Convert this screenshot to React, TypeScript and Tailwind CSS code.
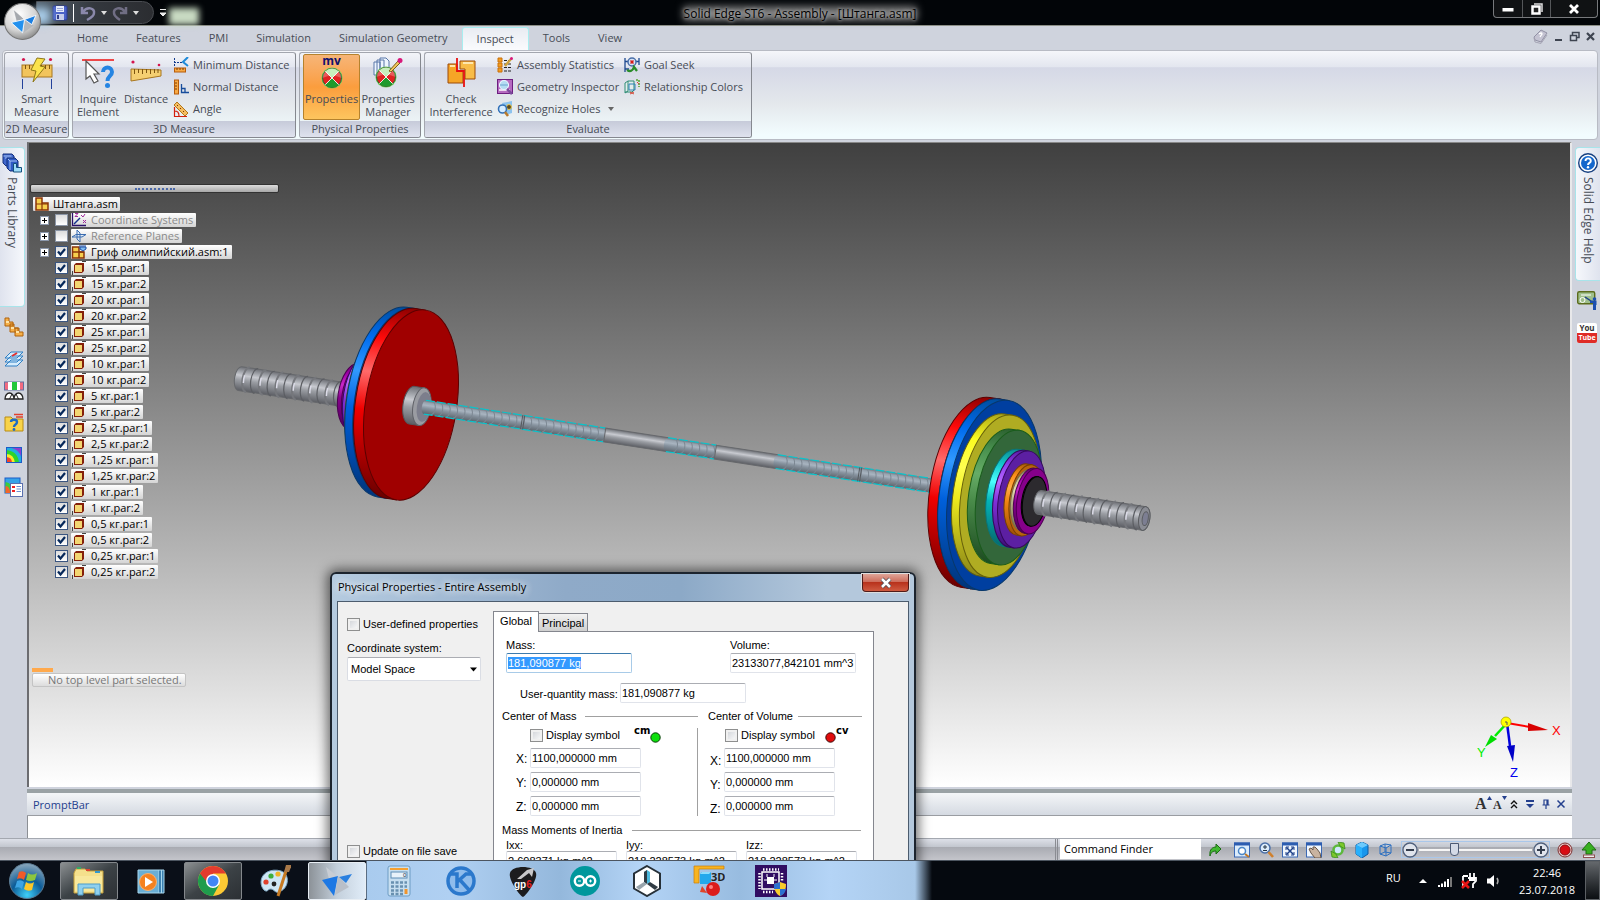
import { useEffect, useRef, type ReactNode } from "react";
import clsx from "clsx";

const TILT = "rotate(8.8)";

/* ---------- small shared controls ---------- */

function Svg({ size = 16, box = 16, children, className }: { size?: number; box?: number; children: ReactNode; className?: string }) {
  return (
    <svg width={size} height={size} viewBox={`0 0 ${box} ${box}`} className={clsx("shrink-0", className)} aria-hidden="true">
      {children}
    </svg>
  );
}

function TreeCheck({ label, checked }: { label: string; checked: boolean }) {
  return (
    <span className="grid h-[12px] w-[13px] shrink-0">
      <input
        type="checkbox"
        aria-label={label}
        defaultChecked={checked}
        className={clsx(
          "peer col-start-1 row-start-1 h-full w-full appearance-none border bg-gradient-to-b from-[#dcdcdc] to-white",
          checked ? "border-[#3a5580]" : "border-[#8b95a5]"
        )}
      />
      <svg viewBox="0 0 13 12" className="pointer-events-none col-start-1 row-start-1 hidden h-full w-full peer-checked:block">
        <path d="M3 5.5 L5.5 8.5 L10 3" fill="none" stroke="#06285a" strokeWidth="2.2" />
      </svg>
    </span>
  );
}

function DialogCheck({ label }: { label: string }) {
  return (
    <label className="flex items-center gap-[3px]">
      <input
        type="checkbox"
        className="h-[13px] w-[13px] appearance-none border border-[#8e8f8f] bg-gradient-to-br from-[#cdd0d5] to-white shadow-[inset_0_0_0_2px_#f0f0f0]"
      />
      {label}
    </label>
  );
}

/* ---------- title bar ---------- */

function AppLogo({ size }: { size: number }) {
  return (
    <Svg size={size} box={36}>
      <defs>
        <radialGradient id="orb" cx="0.4" cy="0.3" r="0.75">
          <stop offset="0" stopColor="#ffffff" />
          <stop offset="0.6" stopColor="#d5d5d5" />
          <stop offset="1" stopColor="#858585" />
        </radialGradient>
      </defs>
      <circle cx="18" cy="18" r="17.5" fill="url(#orb)" stroke="#777" />
      <path d="M9 6 L20 16 L12 18 Z" fill="#a5a9ae" stroke="#fff" strokeWidth="0.6" />
      <path d="M20 16 L19 29 L29 22 Z" fill="#b3b7bc" />
      <path d="M7 19 L20 16 L18 29 Z" fill="#2391ee" stroke="#fff" strokeWidth="0.8" />
      <path d="M20 16 L31 12 L27 21 Z" fill="#1b7fe2" stroke="#fff" strokeWidth="0.8" />
    </Svg>
  );
}

function TitleBar() {
  return (
    <header className="relative flex h-[26px] items-start border-b border-[#8c8f86] bg-[#020508]">
      <div className="absolute left-[169px] top-[8px] h-[17px] w-[30px] bg-[#c8dac2] blur-[3px]" />
      <div className="absolute left-[32px] top-[8px] h-[16px] w-[18px] bg-[#a9cdea] blur-[4px]" />
      <div className="absolute left-[4px] top-[3px] z-10">
        <AppLogo size={37} />
      </div>
      <div className="ml-9 mt-px flex h-[23px] w-[118px] items-center gap-1 rounded-r-xl border border-[#4a4d52] bg-gradient-to-r from-[#8fa7bc]/60 via-[#33373d] to-[#2b2d31] pl-[15px]">
        <button aria-label="Save">
          <Svg>
            <rect x="1" y="1" width="14" height="14" rx="1" fill="#4a62c8" stroke="#2b3b94" />
            <rect x="4" y="1" width="8" height="6" fill="#e6ecfb" />
            <rect x="4" y="9" width="8" height="6" fill="#c5cdec" />
            <path d="M5 3.500 H11 M5 5.500 H11" stroke="#9aa6d8" />
            <rect x="5" y="10" width="2" height="4" fill="#303d8c" />
          </Svg>
        </button>
        <span className="mx-px h-[18px] w-px bg-white" />
        <button aria-label="Undo" className="flex items-center gap-1">
          <Svg size={18} box={18}>
            <path d="M3 3 V9 H9 M4 8 C8 2 16 4 15 9 C15 12 12 14 8 16" fill="none" stroke="#8a88aa" strokeWidth="2.500" />
          </Svg>
          <Svg size={6} box={6}><path d="M0 1 H6 L3 5 Z" fill="#ddd" /></Svg>
        </button>
        <button aria-label="Redo" className="flex items-center gap-1">
          <Svg size={18} box={18}>
            <path d="M15 3 V9 H9 M14 8 C10 2 2 4 3 9 C3 12 6 14 9 16" fill="none" stroke="#706e84" strokeWidth="2.500" />
          </Svg>
          <Svg size={6} box={6}><path d="M0 1 H6 L3 5 Z" fill="#ddd" /></Svg>
        </button>
      </div>
      <button aria-label="Customize toolbar" className="ml-1 mt-[8px]">
        <Svg size={10} box={10}><path d="M2 1.500 H8 M2 5 H8 L5 8 Z" fill="#eee" stroke="#eee" /></Svg>
      </button>
      <div className="absolute left-1/2 top-[6px] -translate-x-1/2">
        <div className="absolute inset-x-0 inset-y-px bg-[#8c8c8c] blur-[4px]" />
        <h1 className="relative whitespace-nowrap text-[12px] leading-[15px] text-black [text-shadow:0_0_3px_#aaa,0_0_4px_#999]">
          Solid Edge ST6 - Assembly - [Штанга.asm]
        </h1>
      </div>
      <div className="absolute right-[2px] top-0 flex h-[18px] rounded-b border border-t-0 border-[#77797c] bg-[#101214]">
        <button aria-label="Minimize" className="grid w-[29px] place-items-center border-r border-[#55575a]">
          <Svg size={12} box={12}><rect x="0.500" y="5" width="11" height="3.500" fill="#fff" /></Svg>
        </button>
        <button aria-label="Restore" className="grid w-[28px] place-items-center border-r border-[#55575a]">
          <Svg size={12} box={12}>
            <path d="M3 1 H11 V9" fill="none" stroke="#ddd" strokeWidth="1.500" />
            <rect x="1.500" y="3.500" width="7" height="7" fill="#222" stroke="#fff" strokeWidth="2.500" />
          </Svg>
        </button>
        <button aria-label="Close" className="grid w-[46px] place-items-center">
          <Svg size={12} box={12}><path d="M2 2 L10 10 M10 2 L2 10" stroke="#fff" strokeWidth="2.800" /></Svg>
        </button>
      </div>
    </header>
  );
}

/* ---------- ribbon ---------- */

const tabs = ["Home", "Features", "PMI", "Simulation", "Simulation Geometry", "Inspect", "Tools", "View"];

function TabRow() {
  return (
    <nav className="flex h-[24px] items-end bg-[#cfd3dd] pl-[63px]">
      {tabs.map((tab) => (
        <button
          key={tab}
          className={clsx(
            "h-[23px] px-[14px] text-[11px] text-[#474c56]",
            tab === "Inspect" && "rounded-t-[3px] border border-b-0 border-[#a8eef0] bg-gradient-to-b from-[#e9ecf2] to-[#fafbfd]"
          )}
        >
          {tab}
        </button>
      ))}
      <div className="ml-auto flex items-center gap-[5px] pb-[6px] pr-[4px]">
        <button aria-label="Help topics">
          <Svg size={15} box={15}>
            <path d="M1 8 L8 1 L14 4 L8 13 L2 11 Z" fill="#c4c3d2" stroke="#9291a5" />
            <path d="M1 9 L2 13 L8 14.500 L14 6" fill="none" stroke="#a5a4b4" />
            <path d="M6 5 Q9 3 9 5 L7 8" fill="none" stroke="#fff" strokeWidth="1.300" />
          </Svg>
        </button>
        <button aria-label="Minimize document">
          <Svg size={11} box={11}><rect x="2" y="8" width="7" height="2" fill="#3e4450" /></Svg>
        </button>
        <button aria-label="Restore document">
          <Svg size={11} box={11}>
            <path d="M3.500 4 V1.500 H10 V6.500 H7" fill="none" stroke="#3e4450" strokeWidth="1.500" />
            <rect x="1.500" y="4.500" width="6" height="5" fill="none" stroke="#3e4450" strokeWidth="1.500" />
          </Svg>
        </button>
        <button aria-label="Close document">
          <Svg size={11} box={11}><path d="M2 2 L9 9 M9 2 L2 9" stroke="#3e4450" strokeWidth="2.200" /></Svg>
        </button>
      </div>
    </nav>
  );
}

function Ball({ cx, cy, r = 9 }: { cx: number; cy: number; r?: number }) {
  return (
    <g transform={`translate(${cx} ${cy}) scale(${r / 9})`}>
      <circle r="9.500" fill="#6fce5a" />
      <circle r="8.500" fill="#e02222" stroke="#24622c" strokeWidth="0.800" />
      <path d="M0 0 L-6 -6 A8.500 8.500 0 0 1 6 -6 Z" fill="#b4eaa8" />
      <path d="M0 0 L-6 6 A8.500 8.500 0 0 0 6 6 Z" fill="#1f9a2c" />
      <path d="M-8.500 0 A8.500 8.500 0 0 1 8.500 0 Q0 -4 -8.500 0 Z" fill="#fff" fillOpacity="0.250" />
      <path d="M-6 -6 L6 6 M6 -6 L-6 6" stroke="#fff" strokeWidth="0.800" />
    </g>
  );
}

const smartIcon = (
  <Svg size={32} box={32}>
    <circle cx="2.500" cy="2.500" r="1.600" fill="#d4144e" />
    <circle cx="29.500" cy="2.500" r="1.600" fill="#d4144e" />
    <rect x="1" y="8" width="30" height="12" fill="#f2c45c" stroke="#a8761e" />
    <path d="M4.500 8 V12 M8.500 8 V12 M12.500 8 V12 M20.500 8 V12 M24.500 8 V12 M28.500 8 V12" stroke="#7d5510" />
    <path d="M1.500 22 V32 M30.500 22 V32" stroke="#23419a" />
    <path d="M16 1 L24 2 L19 9 L24 10 L12 25 L15 14 L10 13 Z" fill="#fbe34c" stroke="#8d7716" />
  </Svg>
);

const inquireIcon = (
  <Svg size={32} box={32}>
    <path d="M0 3 H32" stroke="#ee1111" strokeWidth="1.500" />
    <path d="M4 4 V22 L8 19 L12 26 L16 24 L12 17 H17 Z" fill="#fff" stroke="#555" strokeWidth="1.200" />
    <path d="M21 15 C21 9 30 9 30 15 C30 19 25.500 19 25.500 24" fill="none" stroke="#2584e2" strokeWidth="4" />
    <circle cx="25.500" cy="28.500" r="2.500" fill="#2584e2" />
  </Svg>
);

const distanceIcon = (
  <Svg size={32} box={32}>
    <circle cx="3" cy="5" r="1.600" fill="#d4144e" />
    <circle cx="29" cy="8" r="1.300" fill="#d4144e" />
    <path d="M1 12 L31 13 V19 L1 24 Z" fill="#f5cf71" stroke="#a8761e" />
    <path d="M4.500 12 V17 M8.500 12 V16 M12.500 12 V17 M16.500 12 V16 M20.500 12 V17 M24.500 12 V16 M28 12 V16" stroke="#7d5510" />
  </Svg>
);

const propertiesIcon = (
  <span className="flex h-[32px] flex-col items-center">
    <span className="h-[10px] text-[12px] font-bold leading-[7px] text-[#10106e]">mv</span>
    <Svg size={22} box={22}>
      <Ball cx={11} cy={11} r={10} />
    </Svg>
  </span>
);

const managerIcon = (
  <Svg size={32} box={32}>
    <path d="M2 5 H8 V18 H2 Z M5 3 H12 V17 H5 Z M8 1 H14 L17 4 V15 H8 Z" fill="#eef5ff" stroke="#5877a8" />
    <Ball cx={14} cy={20} r={10} />
    <path d="M17 14 L26 4 L28 6 L19 15 Z" fill="#f0c65a" stroke="#7c5d1b" />
    <circle cx="28" cy="3.500" r="2.500" fill="#d8187a" />
  </Svg>
);

const interferenceIcon = (
  <Svg size={32} box={32}>
    <path d="M3 7 H12 V14 H18 V26 H3 Z" fill="#f6a526" stroke="#9c4a08" />
    <path d="M15 4 H30 V22 H20 V12 H15 Z" fill="#f8bc48" stroke="#9c4a08" />
    <path d="M5 9 H10 M18 6 H28" stroke="#ffe7ae" strokeWidth="2" />
    <path d="M12 1 V14 H19 V30" fill="none" stroke="#e81010" strokeWidth="1.800" />
  </Svg>
);

const smallIcons: Record<string, ReactNode> = {
  "Minimum Distance": (
    <Svg>
      <path d="M1.500 1 V9 M1 5.500 H10" stroke="#123a8c" strokeDasharray="2 1" />
      <path d="M15 0 L10 5 L15 9" fill="none" stroke="#1f8ad8" strokeWidth="2" />
      <rect x="1.500" y="11" width="11" height="4" fill="#f7a944" stroke="#b75a08" />
      <path d="M4 11 V13 M7 11 V13 M10 11 V13" stroke="#7c3c04" />
    </Svg>
  ),
  "Normal Distance": (
    <Svg>
      <rect x="1.500" y="1" width="4" height="14" fill="#f7a944" stroke="#b75a08" />
      <path d="M2 4 H4 M2 7 H4 M2 10 H4" stroke="#7c3c04" />
      <path d="M8.500 5 V13.500 H16 M8.500 9.500 H12 V13" fill="none" stroke="#174d9c" strokeWidth="1.300" />
    </Svg>
  ),
  Angle: (
    <Svg>
      <path d="M4 1 L15 12 L12 15 L1 4 Z" fill="#f5bd60" stroke="#b3771a" />
      <path d="M5 4 L4 5 M8 7 L7 8 M11 10 L10 11" stroke="#7c3c04" />
      <path d="M1.500 6 V15.500 H14 M1.500 10 Q6 10 6 15" fill="none" stroke="#d3200e" strokeWidth="1.200" />
    </Svg>
  ),
  "Assembly Statistics": (
    <Svg>
      <path d="M1 1 H5 V5 H1 Z M1 6 H5 V10 H1 Z M1 11 H5 V15 H1 Z" fill="#f59c1c" stroke="#c8700c" />
      <path d="M7 3.500 H15 M7 7 H15 M7 10.500 H15 M7 14 H15" stroke="#222" strokeDasharray="3 1" />
      <path d="M8 9 L14 2" stroke="#cfa23c" strokeWidth="2.400" />
      <circle cx="14.500" cy="1.500" r="1.500" fill="#d8187a" />
    </Svg>
  ),
  "Geometry Inspector": (
    <Svg>
      <rect x="0.500" y="0.500" width="15" height="14" fill="#b56ac0" stroke="#6d1e80" />
      <path d="M2 11 H13" stroke="#fff" strokeWidth="1.500" />
      <circle cx="7" cy="6" r="4.500" fill="#b4dcf2" stroke="#e8f6ff" strokeWidth="1.200" />
      <path d="M3 6 H11" stroke="#6aa4d0" />
      <path d="M10 10 L15 15" stroke="#7c4a9c" strokeWidth="2.500" />
    </Svg>
  ),
  "Recognize Holes": (
    <Svg>
      <path d="M5 2 L15 0 V12 L9 14 Z" fill="#8cc3ee" />
      <circle cx="12" cy="6" r="2.500" fill="#5b4a22" stroke="#eacb55" />
      <circle cx="5.500" cy="8" r="4" fill="#d6edff" stroke="#3170b8" strokeWidth="1.600" />
      <path d="M8 11 L11 15" stroke="#b87a2c" strokeWidth="2.500" />
    </Svg>
  ),
  "Goal Seek": (
    <Svg>
      <path d="M1 1 V15 M15 1 V8 M1 4.500 H15 M1 12 H5" stroke="#1f4a90" strokeWidth="1.300" />
      <circle cx="8" cy="5" r="4" fill="#d6e4f8" stroke="#4a6fa8" strokeWidth="1.500" />
      <path d="M6.500 3.500 L9.500 6.500 M9.500 3.500 L6.500 6.500" stroke="#d81818" strokeWidth="1.500" />
      <path d="M3 13 Q8 16 10 10 L13 14" fill="none" stroke="#2a8c2a" strokeWidth="2.300" />
    </Svg>
  ),
  "Relationship Colors": (
    <Svg>
      <path d="M1 4 L4 2 V12 L1 14 Z M4 2 H10 V11 L8 13 H1" fill="#e8f4ee" fillOpacity="0.600" stroke="#2f8c74" />
      <path d="M5 5 H11 V11 H5 Z" fill="none" stroke="#2c82b8" />
      <path d="M12 1 H15 V8" fill="none" stroke="#57a835" strokeWidth="1.600" strokeDasharray="2 1" />
      <path d="M6 13 L10 15 M10 13 L6 15 M13 3 L15 5" stroke="#d24a3a" />
    </Svg>
  ),
};

function BigButton({ icon, lines, active, className }: { icon: ReactNode; lines: string[]; active?: boolean; className?: string }) {
  return (
    <button
      className={clsx(
        "flex h-[66px] flex-col items-center rounded-[2px] text-[11px] leading-[13px] text-[#474c56]",
        active ? "border border-[#b5822d] bg-gradient-to-b from-[#f6b577] via-[#fb9d3d] to-[#fdc55e] pt-[2px]" : "pt-[3px]",
        className
      )}
    >
      {icon}
      <span className="mt-[3px] whitespace-pre">{lines.join("\n")}</span>
    </button>
  );
}

function SmallButton({ label, menu }: { label: string; menu?: boolean }) {
  return (
    <button className="flex h-[22px] items-center gap-1 whitespace-nowrap text-[11px] text-[#474c56]">
      {smallIcons[label]}
      {label}
      {menu && <Svg size={6} box={6} className="ml-1"><path d="M0 1 H6 L3 5 Z" fill="#666" /></Svg>}
    </button>
  );
}

function Group({ title, className, children }: { title: string; className: string; children: ReactNode }) {
  return (
    <section
      className={clsx(
        "flex shrink-0 flex-col overflow-hidden rounded-[3px] border border-[#a3a6ae] border-r-[#85888f] border-b-[#85888f]",
        className
      )}
    >
      <div className="flex flex-1 pt-px">{children}</div>
      <h2 className="h-[16px] whitespace-nowrap bg-gradient-to-b from-[#c6cad9] to-[#dfe2ee] text-center text-[11px] leading-[15px] text-[#474c56]">
        {title}
      </h2>
    </section>
  );
}

function Ribbon() {
  return (
    <div className="mx-[2px] flex h-[90px] gap-[3px] rounded border border-[#b8bbc4] bg-[linear-gradient(#f5f6fa,#e3e6ef_18%,#d5d8e6_19%,#e4e8ec_60%,#f2fcfe_95%)] p-px">
      <Group title="2D Measure" className="w-[65px]">
        <BigButton icon={smartIcon} lines={["Smart", "Measure"]} className="w-full" />
      </Group>
      <Group title="3D Measure" className="w-[224px]">
        <BigButton icon={inquireIcon} lines={["Inquire", "Element"]} className="w-[50px]" />
        <BigButton icon={distanceIcon} lines={["Distance"]} className="w-[46px]" />
        <div className="flex flex-col pl-1">
          <SmallButton label="Minimum Distance" />
          <SmallButton label="Normal Distance" />
          <SmallButton label="Angle" />
        </div>
      </Group>
      <Group title="Physical Properties" className="w-[122px]">
        <BigButton icon={propertiesIcon} lines={["Properties"]} active className="ml-[3px] w-[57px]" />
        <BigButton icon={managerIcon} lines={["Properties", "Manager"]} className="w-[56px]" />
      </Group>
      <Group title="Evaluate" className="w-[328px]">
        <BigButton icon={interferenceIcon} lines={["Check", "Interference"]} className="w-[72px]" />
        <div className="flex w-[127px] flex-col">
          <SmallButton label="Assembly Statistics" />
          <SmallButton label="Geometry Inspector" />
          <SmallButton label="Recognize Holes" menu />
        </div>
        <div className="flex flex-col">
          <SmallButton label="Goal Seek" />
          <SmallButton label="Relationship Colors" />
        </div>
      </Group>
    </div>
  );
}

/* ---------- side rails ---------- */

function LeftRail() {
  return (
    <aside className="flex w-[27px] shrink-0 flex-col bg-[#cfd3dd] pt-[5px]">
      <button className="flex h-[160px] w-[25px] flex-col items-center rounded-r-[4px] border border-l-0 border-[#a8e4ea] bg-gradient-to-r from-[#dfe3ee] to-[#f6f8fc] pt-[5px]">
        <Svg size={20} box={20}>
          <path d="M1 1 H10 L12 3 V13 H4 L1 10 Z" fill="#3f66cc" stroke="#14307c" />
          <path d="M1.500 3 H9.500 M3 5 H11" stroke="#a8c4f6" />
          <path d="M5 5 H13 L16 8 V18 H8 L5 15 Z" fill="#2e5ac4" stroke="#14307c" />
          <path d="M6 6 L8 8 H15 M8 8 V17" fill="none" stroke="#a8c4f6" />
          <path d="M11.500 10.500 H14.500 V14.500 H19.500 V19 H11.500 Z" fill="#9fdcf8" stroke="#14507c" />
        </Svg>
        <span className="mt-1 text-[12px] leading-[14px] text-[#474c56] [writing-mode:vertical-rl]">Parts Library</span>
      </button>
      <div className="flex flex-col items-center gap-[12px] pt-[10px]">
        <button aria-label="Part families">
          <Svg size={20} box={20}>
            <path d="M1 1 H5 V5 H9 V9 H1 Z M6 7 H10 V11 H14 V15 H6 Z M11 11 H15 V15 H19 V19 H11 Z" fill="#f5b04a" stroke="#b0620c" />
            <path d="M2 5 H5 M7 11 H10 M12 15 H15" stroke="#ffe3a6" strokeWidth="2" />
          </Svg>
        </button>
        <button aria-label="Layers">
          <Svg size={20} box={20}>
            <path d="M1 17 L7 11 H19 L13 17 Z M1 13 L7 7 H19 L13 13 Z M1 9 L7 3 H19 L13 9 Z" fill="#d6ecfc" stroke="#2f7fc4" />
            <path d="M8 7 L13 4" stroke="#e23030" strokeWidth="2" />
          </Svg>
        </button>
        <button aria-label="Sensors">
          <Svg size={20} box={20}>
            <rect x="0.500" y="1" width="19" height="8" fill="#f26a80" stroke="#6270a0" />
            <rect x="4" y="1" width="4" height="8" fill="#fff" />
            <rect x="8" y="1" width="5" height="8" fill="#22c83a" />
            <rect x="13" y="1" width="3" height="8" fill="#fff" />
            <path d="M1 18 A4.500 6 0 0 1 10 18 Z M10 18 A4.500 6 0 0 1 19 18 Z" fill="#fff" stroke="#222" strokeWidth="1.300" />
            <path d="M5.500 18 L8 13 M14.500 18 L12 13" stroke="#222" />
          </Svg>
        </button>
        <button aria-label="Assembly help">
          <Svg size={20} box={20}>
            <path d="M1 4 H7 L9 6 H19 V18 H1 Z" fill="#f8d34a" stroke="#b88c14" />
            <path d="M10 1.500 H19 M12 4 H19" stroke="#e2402c" strokeWidth="1.500" />
            <path d="M7 9 C7 6 13 6 13 9 C13 12 10 11 10 14" fill="none" stroke="#1d6cc4" strokeWidth="2.400" />
            <circle cx="10" cy="16.500" r="1.400" fill="#1d6cc4" />
          </Svg>
        </button>
        <button aria-label="Simulation">
          <Svg size={20} box={20}>
            <rect x="2" y="2" width="16" height="16" fill="#8b3fd0" />
            <path d="M2 2 Q18 3 18 18 H2 Z" fill="#1faee0" />
            <path d="M2 5 Q14 6 15 18 H2 Z" fill="#2cd42c" />
            <path d="M2 9 Q10 9 11 18 H2 Z" fill="#f8ec2a" />
            <path d="M2 12 Q8 12 8 18 H2 Z" fill="#f3442a" />
            <rect x="2.500" y="2.500" width="15" height="15" fill="none" stroke="#1a5cc8" />
          </Svg>
        </button>
        <button aria-label="Simulation report">
          <Svg size={20} box={20}>
            <rect x="1" y="1" width="15" height="15" fill="#36a2e8" stroke="#1a5cc8" />
            <path d="M1.500 5 Q9 6 9 16 H1.500 Z" fill="#3ccc3c" />
            <path d="M1.500 9 Q6 9 6 16 H1.500 Z" fill="#f5642a" />
            <rect x="6.500" y="6.500" width="12" height="13" fill="#fff" stroke="#5a6fae" />
            <path d="M8 10 H11 M8 14 H11" stroke="#e22" strokeWidth="2" />
            <path d="M12.500 9.500 H17 M12.500 12 H17 M12.500 14.500 H17" stroke="#6c8fd0" />
          </Svg>
        </button>
      </div>
    </aside>
  );
}

function RightRail() {
  return (
    <aside className="flex w-[28px] shrink-0 flex-col items-end bg-[#cfd3dd] pt-[5px]">
      <button className="flex h-[134px] w-[25px] flex-col items-center rounded-l-[4px] border border-r-0 border-[#a8e4ea] bg-gradient-to-r from-[#f6f8fc] to-[#dfe3ee] pt-[5px]">
        <Svg size={20} box={20}>
          <circle cx="10" cy="10" r="9.300" fill="#fff" stroke="#153f80" strokeWidth="1.400" />
          <circle cx="10" cy="10" r="7" fill="#1467cc" />
          <path d="M7.500 8 C7.500 4.500 12.800 4.500 12.800 8 C12.800 10 10 9.800 10 12" fill="none" stroke="#fff" strokeWidth="1.900" />
          <circle cx="10" cy="14.300" r="1.200" fill="#fff" />
        </Svg>
        <span className="mt-1 whitespace-nowrap text-[12px] leading-[14px] text-[#474c56] [writing-mode:vertical-rl]">Solid Edge Help</span>
      </button>
      <div className="flex flex-col gap-[13px] pr-[3px] pt-[9px]">
        <button aria-label="Training">
          <Svg size={20} box={20}>
            <rect x="0.700" y="1.700" width="17" height="12" rx="1.500" fill="#9fbf8c" stroke="#5c6c1c" strokeWidth="1.400" />
            <path d="M4 5 H14" stroke="#fff" />
            <circle cx="5.500" cy="10" r="2.500" fill="none" stroke="#fff" />
            <path d="M8 7 L14 11" stroke="#1c3f8c" strokeWidth="1.500" />
            <circle cx="17.500" cy="9" r="1.800" fill="#1c4fb0" />
            <path d="M13 10.500 H19.500 V15 H19 V20 H16 V13 H13 Z" fill="#1c4fb0" />
          </Svg>
        </button>
        <button aria-label="YouTube" className="flex w-5 flex-col overflow-hidden rounded-[2px] bg-white text-[8px] font-bold leading-[10px] text-[#333]">
          <span>You</span>
          <span className="bg-[#df2b26] text-[7px] text-white">Tube</span>
        </button>
      </div>
    </aside>
  );
}

/* ---------- model ---------- */

type DiscSpec = { from: number; to: number; r: number; rim: string; face: string; line: string };

// positions run along the bar's axis, measured from the inner face of the left stack
const outerStack: DiscSpec[] = [
  { from: 571, to: 581, r: 96, rim: "red", face: "#a00000", line: "#5c0000" },
  { from: 581, to: 590, r: 96, rim: "blue", face: "#003fa0", line: "#08386a" },
  { from: 588, to: 596, r: 82, rim: "yellow", face: "#b0ac22", line: "#66600a" },
  { from: 597, to: 605, r: 68, rim: "green", face: "#33673a", line: "#1a5c1c" },
  { from: 606, to: 613, r: 49, rim: "cyan", face: "#109090", line: "#0a7478" },
  { from: 613, to: 618, r: 49, rim: "violet", face: "#5c1fa2", line: "#35085c" },
  { from: 618, to: 623, r: 36, rim: "orange", face: "#b8640c", line: "#774004" },
  { from: 622, to: 627, r: 31, rim: "beige", face: "#a09a70", line: "#77704c" },
  { from: 626, to: 629, r: 33, rim: "magenta", face: "#86008a", line: "#4c0052" },
  { from: 630, to: 631, r: 25, rim: "black", face: "#2c2a2e", line: "#000000" },
];

const innerStack: DiscSpec[] = [
  { from: -58, to: -54, r: 33, rim: "magenta", face: "#86008a", line: "#4c0052" },
  { from: -46, to: -42, r: 47, rim: "violet", face: "#5c1fa2", line: "#35085c" },
  { from: -30, to: -25, r: 68, rim: "green", face: "#33673a", line: "#1a5c1c" },
  { from: -26, to: -19, r: 82, rim: "yellow", face: "#b0ac22", line: "#66600a" },
  { from: -19, to: -11, r: 96, rim: "blue", face: "#003fa0", line: "#08386a" },
  { from: -10, to: 0, r: 96, rim: "red", face: "#a00000", line: "#5c0000" },
];

const rims: Record<string, string[]> = {
  red: ["#8c0000", "#ff0a0a", "#ff6a6a", "#f00000", "#6c0000"],
  blue: ["#004c9c", "#006cf0", "#329aff", "#0060dc", "#00357c"],
  yellow: ["#a8a418", "#fcfc20", "#ffff50", "#ece81c", "#8c8818"],
  green: ["#2c6030", "#4a9250", "#66ac66", "#4a8c4a", "#1e4c22"],
  cyan: ["#0c8c90", "#14c8cc", "#4cffff", "#04b4b8", "#046c70"],
  violet: ["#5818a0", "#9040f0", "#b868ff", "#8030d8", "#40107c"],
  orange: ["#a85c08", "#ff9018", "#ffac48", "#f08410", "#a05008"],
  beige: ["#8c8660", "#c8c090", "#e4dcb0", "#b8b088", "#78724c"],
  magenta: ["#60006a", "#a000a8", "#c828c8", "#88008c", "#50005c"],
  black: ["#111", "#222", "#333", "#222", "#000"],
  steel: ["#6c6e74", "#9a9da3", "#c8cad0", "#9a9da3", "#5c5e64"],
  grip: ["#6c747c", "#98a4b0", "#a8b4c0", "#8894a0", "#5c646c"],
};

function Disc({ from, to, r, rim, face, line }: DiscSpec) {
  const rx = r * 0.475;
  return (
    <g stroke={line} strokeWidth="1">
      <path d={`M${to} ${-r} L${from} ${-r} A${rx} ${r} 0 0 0 ${from} ${r} L${to} ${r} Z`} fill={`url(#rim-${rim})`} />
      <ellipse cx={to} cy="0" rx={rx} ry={r} fill={face} />
    </g>
  );
}

function Sleeve({ from, to, cap }: { from: number; to: number; cap?: boolean }) {
  const grooves = [];
  for (let s = from + 8; s < to - 2; s += 8.400) grooves.push(s);
  return (
    <g fill="none">
      <path d={`M${to} -12 L${from} -12 A5.500 12 0 0 0 ${from} 12 L${to} 12 A5.500 12 0 0 0 ${to} -12`} fill="url(#rim-steel)" stroke="#66686c" strokeWidth="1" />
      {grooves.map((s, i) => (
        <g key={s}>
          <path
            d={`M${s} -12.500 A5.500 12.500 0 0 0 ${s} 12.500`}
            stroke={i % 2 ? "#5c5e63" : "#75777c"}
            strokeWidth={i % 2 ? 1.200 : 2}
          />
          {i % 2 === 0 && <path d={`M${s - 4} -4 A5.500 12.500 0 0 0 ${s - 4} 4`} stroke="#dcdce8" strokeWidth="1.500" />}
        </g>
      ))}
      {cap && (
        <>
          <ellipse cx={to} cy="0" rx="5.500" ry="12" fill="#8a8c94" stroke="#5a5c60" />
          <ellipse cx={to + 1} cy="0" rx="3" ry="7" fill="#7c7e92" stroke="#5a5c60" />
        </>
      )}
    </g>
  );
}

function Grip({ from, to }: { from: number; to: number }) {
  const waves = [];
  for (let s = from + 7; s < to; s += 7.500) waves.push(s);
  return (
    <g>
      <path d={`M${to} -7 H${from} A3 7 0 0 0 ${from} 7 H${to} Z`} fill="url(#rim-grip)" />
      {waves.map((s) => (
        <path key={s} d={`M${s} -6.500 A3.500 6.500 0 0 1 ${s} 6.500`} fill="none" stroke="#7c8792" strokeWidth="1" />
      ))}
      <path d={`M${from} -7 H${to} M${from} 7 H${to}`} stroke="#08c4cc" strokeWidth="1.200" strokeDasharray="9 2" />
    </g>
  );
}

function Barbell() {
  return (
    <svg viewBox="220 290 960 320" className="absolute left-[191px] top-[147px] h-[320px] w-[960px]" role="img" aria-label="Barbell model">
      <defs>
        {Object.entries(rims).map(([name, c]) => (
          <linearGradient key={name} id={`rim-${name}`} x1="0" y1="0" x2="0" y2="1">
            <stop offset="0" stopColor={c[0]} />
            <stop offset="0.180" stopColor={c[1]} />
            <stop offset="0.360" stopColor={c[2]} />
            <stop offset="0.560" stopColor={c[3]} />
            <stop offset="1" stopColor={c[4]} />
          </linearGradient>
        ))}
      </defs>
      <g transform={`translate(411 405) ${TILT}`}>
        <Sleeve from={-173} to={-58} />
        {innerStack.map((d) => <Disc key={d.from} {...d} />)}
        <path d="M11 -19 H1 A9 19 0 0 0 1 19 H11 Z" fill="url(#rim-steel)" stroke="#55575c" />
        <ellipse cx="11" cy="0" rx="9" ry="19" fill="#9a9ca2" stroke="#606268" />
        <ellipse cx="13" cy="0" rx="7" ry="15" fill="#7c7e8c" />
        <Grip from={14} to={196} />
        <rect x="196" y="-7" width="63" height="14" fill="url(#rim-steel)" stroke="#66686c" />
        <Grip from={259} to={308} />
        <rect x="308" y="-7" width="62" height="14" fill="url(#rim-steel)" stroke="#66686c" />
        <Grip from={370} to={532} />
        <path d="M112 -7 V7 M114 -7 V7 M453 -7 V7 M455 -7 V7" stroke="#55595e" />
        {outerStack.map((d) => <Disc key={d.from} {...d} />)}
        <Sleeve from={636} to={742} cap />
      </g>
    </svg>
  );
}

function Triad() {
  return (
    <svg viewBox="0 0 92 68" className="absolute bottom-[7px] right-px h-[68px] w-[92px]" role="img" aria-label="Axes">
      <path d="M30 11 L53 15" stroke="#f00" strokeWidth="2" />
      <path d="M51 11 L71 18 L51 19 Z" fill="#d80000" />
      <path d="M30 11 L18 24" stroke="#0e0" strokeWidth="2.500" />
      <path d="M14 23 L20 27 L8 35 Z" fill="#0d0" />
      <path d="M30 11 L33 34" stroke="#00d" strokeWidth="2.500" />
      <path d="M30 34 L38 33 L36 50 Z" fill="#0000c8" />
      <circle cx="29" cy="10" r="5" fill="#ff0" stroke="#a89a00" strokeWidth="0.700" />
      <path d="M28 10 H30 V13" fill="none" stroke="#555" />
      <g fontFamily="Liberation Sans" fontSize="13">
        <text x="75" y="23" fill="#f00">X</text>
        <text x="0" y="45" fill="#0e0">Y</text>
        <text x="33" y="65" fill="#00e">Z</text>
      </g>
    </svg>
  );
}

/* ---------- path finder tree ---------- */

const partNames = ["15", "20", "25", "10", "5", "2,5", "1,25", "1", "0,5", "0,25"].flatMap((kg) => [
  `${kg} кг.par:1`,
  `${kg} кг.par:2`,
]);

const partIcon = (
  <Svg size={16} box={16}>
    <path d="M1.500 11 V15 M11 1.500 H15" stroke="#444" />
    <path d="M3 5 L5 3 H13 V11 L11 13 H3 Z" fill="#85200a" />
    <rect x="4" y="5" width="7" height="7" fill="#f3d672" />
  </Svg>
);

const asmIcon = (
  <Svg size={14} box={14}>
    <path d="M1 1 H7 V6 H13 V13 H1 Z" fill="#f6cf4e" stroke="#8a3408" strokeWidth="1.500" />
    <path d="M1 7 H13 M7 6 V13" stroke="#8a3408" strokeWidth="1.200" />
  </Svg>
);

const subAsmIcon = (
  <Svg size={16} box={16}>
    <path d="M1.500 3 H8 V14 H1.500 Z M8 8 H13 V14 H8 Z" fill="#f6cf4e" stroke="#8a3408" strokeWidth="1.500" />
    <path d="M1 8 H13" stroke="#8a3408" strokeWidth="1.500" />
    <path d="M8 2 H15 M9 3 H15 V5 L12 7 L9 5 Z" fill="#7fbaf0" stroke="#1d4fa4" />
  </Svg>
);

const coordIcon = (
  <Svg size={16} box={16}>
    <path d="M1.500 1 V13.500 H15" fill="none" stroke="#2a1068" strokeWidth="1.300" />
    <path d="M3 12 L9 6" stroke="#14308c" strokeWidth="1.500" />
    <path d="M4 1.500 H7 L4 4.500 H7 M10 3 L12 5 L14 2 M12 8 L15 11 M15 8 L12 11" fill="none" stroke="#a02c9c" />
  </Svg>
);

const planeIcon = (
  <Svg size={16} box={16}>
    <path d="M1 9 L5 6.500 H15 L11 9 Z M6 2 L9 5 V14 L6 11 Z" fill="#dbe9f8" fillOpacity="0.600" stroke="#3a6cb0" />
  </Svg>
);

function TreeRow({ label, icon, checked = true, expandable, muted }: { label: string; icon: ReactNode; checked?: boolean; expandable?: boolean; muted?: boolean }) {
  return (
    <li className="flex h-4 items-center">
      <span className="flex w-[15px] shrink-0">
        {expandable && (
          <button aria-label={`Expand ${label}`} className="grid h-[9px] w-[9px] place-items-center border border-[#8b97ab] bg-white">
            <Svg size={7} box={7}><path d="M1 3.500 H6 M3.500 1 V6" stroke="#000" /></Svg>
          </button>
        )}
      </span>
      <TreeCheck label={label} checked={checked} />
      <span
        className={clsx(
          "ml-[3px] flex h-[14px] items-center gap-1 whitespace-nowrap rounded-[1px] bg-gradient-to-b from-white to-[#d4d4d4] pr-[3px] text-[11px] leading-[13px]",
          muted ? "text-[#8a8a8a]" : "text-black"
        )}
      >
        {icon}
        <span className="h-[14px]">{label}</span>
      </span>
    </li>
  );
}

function Viewport() {
  return (
    <main className="relative flex-1 overflow-hidden border-l-2 border-t border-r-2 border-t-[#888] border-l-[#6c6c70] border-r-[#e8e8ea] bg-gradient-to-b from-[#404040] to-white">
      <div className="ml-px mt-[41px] h-[9px] w-[249px] rounded-[2px] border border-[#333] bg-gradient-to-b from-[#ddd] to-[#a8a8a8]">
        <div className="mx-auto h-[3px] w-[40px] translate-y-[2px] border-b-2 border-dotted border-[#4a68a8]" />
      </div>
      <div className="pl-[4px] pt-[3px]">
        <div className="flex h-4 w-fit items-center">
          <span className="flex h-[14px] items-center gap-1 whitespace-nowrap rounded-[1px] bg-gradient-to-b from-white to-[#d4d4d4] px-[2px] text-[11px] leading-[13px]">
            {asmIcon}
            <span className="h-[14px]">Штанга.asm</span>
          </span>
        </div>
        <ul className="pl-[7px]">
          <TreeRow label="Coordinate Systems" icon={coordIcon} checked={false} expandable muted />
          <TreeRow label="Reference Planes" icon={planeIcon} checked={false} expandable muted />
          <TreeRow label="Гриф олимпийский.asm:1" icon={subAsmIcon} expandable />
          {partNames.map((name) => (
            <TreeRow key={name} label={name} icon={partIcon} />
          ))}
        </ul>
      </div>
      <div className="ml-[3px] mt-[88px] h-1 w-[21px] bg-[#ffa94c]" />
      <p className="ml-[3px] mt-px h-[14px] w-fit whitespace-nowrap rounded-[2px] border border-[#c4c4c4] bg-gradient-to-b from-white to-[#dcdcdc] pl-[15px] pr-[3px] text-[11px] leading-[12px] text-[#777]">
        No top level part selected.
      </p>
      <Barbell />
      <Triad />
    </main>
  );
}

/* ---------- prompt and status bars ---------- */

function PromptBar() {
  return (
    <section className="mt-[2px] border-t-4 border-[#9aa2a5]">
      <div className="flex h-[23px] items-center justify-between border-b border-[#9a9da2] bg-gradient-to-b from-[#f4f6f8] to-[#d5dae2] pl-[6px] pr-[2px]">
        <h2 className="pt-[2px] text-[11px] text-[#24408e]">PromptBar</h2>
        <div className="flex items-center gap-[2px] text-[#24408e]">
          <button aria-label="Larger text" className="flex h-4 w-4 items-end font-['Liberation_Serif',serif] text-[16px] font-bold leading-4 text-[#333]">
            A<Svg size={5} box={5} className="self-start"><path d="M0 4 L2.500 0 L5 4 Z" fill="#24408e" /></Svg>
          </button>
          <button aria-label="Smaller text" className="flex h-4 w-[14px] items-end font-['Liberation_Serif',serif] text-[12px] font-bold leading-[13px] text-[#333]">
            A<Svg size={5} box={5} className="self-start"><path d="M0 0 L2.500 4 L5 0 Z" fill="#24408e" /></Svg>
          </button>
          <button aria-label="Collapse" className="w-[14px]">
            <Svg size={10} box={10}><path d="M2 5 L5 2 L8 5 M2 9 L5 6 L8 9" fill="none" stroke="#111" strokeWidth="1.400" /></Svg>
          </button>
          <button aria-label="Options" className="w-[14px]">
            <Svg size={10} box={10}><path d="M1 1 H9 V3 H1 Z M1 5 H9 L5 9 Z" fill="#24408e" /></Svg>
          </button>
          <button aria-label="Pin" className="w-[13px]">
            <Svg size={10} box={10}><path d="M3 1 H7 V6 H3 Z M1.500 6 H8.500 M5 6 V10 M6 1 V6" fill="none" stroke="#24408e" strokeWidth="1.200" /></Svg>
          </button>
          <button aria-label="Close prompt bar" className="w-[14px]">
            <Svg size={10} box={10}><path d="M1.500 1.500 L8.500 8.500 M8.500 1.500 L1.500 8.500" stroke="#24408e" strokeWidth="1.500" /></Svg>
          </button>
        </div>
      </div>
      <div className="h-[22px] border-l border-[#8c8f94] bg-white" />
    </section>
  );
}

const viewTools: { label: string; art: ReactNode }[] = [
  { label: "Zoom area", art: <><rect x="0.500" y="1" width="15" height="14" fill="#dcecfb" stroke="#3a68b4" /><path d="M0 2 H16" stroke="#2c5cb0" strokeWidth="3" /><circle cx="8" cy="9" r="3.500" fill="#fff" stroke="#4a86c8" strokeWidth="1.500" /><path d="M11 12 L15 15" stroke="#c07828" strokeWidth="2" /></> },
  { label: "Zoom", art: <><circle cx="7" cy="6" r="5" fill="#dcecfb" stroke="#4a6fa8" strokeWidth="1.500" /><path d="M5 5 H9 M7 3 V7 M5 8.500 H9" stroke="#234" /><path d="M10.500 10 L15 15" stroke="#d0802c" strokeWidth="2.600" /></> },
  { label: "Fit", art: <><rect x="0.500" y="1" width="15" height="14" fill="#f0f6fd" stroke="#3a68b4" /><path d="M0 2 H16" stroke="#2c5cb0" strokeWidth="3" /><path d="M4.500 5.500 L11.500 12.500 M11.500 5.500 L4.500 12.500" stroke="#1c3f88" strokeWidth="1.500" /><path d="M4 8 V5 H7 M9 5 H12 V8 M4 10 V13 H7 M9 13 H12 V10" fill="none" stroke="#1c3f88" /></> },
  { label: "Pan", art: <><rect x="0.500" y="1" width="15" height="14" fill="#f0f6fd" stroke="#3a68b4" /><path d="M0 2 H16" stroke="#2c5cb0" strokeWidth="3" /><path d="M3 7 L5 6 L7 8 L7 5 L9 5 L11 7 L14 11 L15 16 H9 L5 11 Z" fill="#c9b3a0" stroke="#665548" /></> },
  { label: "Rotate", art: <><circle cx="8" cy="8" r="4.500" fill="#cfe8fb" stroke="#5cb83c" strokeWidth="2.600" /><path d="M8 0 L14 1 L15 7 L10 4 Z M8 16 L2 15 L1 9 L6 12 Z" fill="#7cc82c" stroke="#3a8c1c" strokeWidth="0.800" /></> },
  { label: "Shaded view", art: <><path d="M8 0 L14 3 V12 L8 16 L2 12 V3 Z" fill="#1896ec" stroke="#0c5ca4" /><path d="M2 3 L8 6 L14 3 L8 0 Z" fill="#6ccafc" /><path d="M8 6 V16 L2 12 V3 Z" fill="#28b0fc" /></> },
  { label: "Wireframe view", art: <path d="M2 4 L7 2 L13 3 V11 L8 14 L2 12 Z M2 4 L8 6 L13 3 M8 6 V14 M7 2 V10 L2 12 M7 10 L13 11" fill="none" stroke="#2c6fc0" strokeWidth="1" /> },
];

function RoundButton({ label, plus }: { label: string; plus?: boolean }) {
  return (
    <button aria-label={label}>
      <Svg>
        <circle cx="8" cy="8" r="7" fill="#e0e4ec" stroke="#50607c" strokeWidth="1.300" />
        <path d={plus ? "M4 8 H12 M8 4 V12" : "M4 8 H12"} stroke="#333c4c" strokeWidth="2" />
      </Svg>
    </button>
  );
}

function StatusBar() {
  return (
    <footer className="flex h-[22px] shrink-0 items-center justify-end border-t border-[#a4a8b0] bg-[linear-gradient(#dde0e8,#c2c6ce_38%,#a9abb2_40%,#c4c5cb)]">
      <span className="mr-[2px] h-full w-[3px] border-x border-[#8a8c92]" />
      <input
        aria-label="Command Finder"
        defaultValue="Command Finder"
        className="h-[20px] w-[141px] self-start bg-white px-1 pb-[2px] text-[11px] text-black outline-none"
      />
      <button aria-label="Go" className="ml-[6px] mr-[11px]">
        <Svg><path d="M3 14 C2 7 6 5 9 5 V2 L14 7 L9 12 V9 C6 9 4 10 3 14 Z" fill="#42b832" stroke="#1c6c14" /></Svg>
      </button>
      <div className="flex items-center gap-2">
        {viewTools.map((t) => (
          <button key={t.label} aria-label={t.label}>
            <Svg>{t.art}</Svg>
          </button>
        ))}
      </div>
      <div className="ml-[7px] flex h-[17px] w-[149px] items-center border border-[#a9c7ea]">
        <RoundButton label="Zoom out" />
        <input
          type="range"
          aria-label="Zoom level"
          defaultValue={30}
          className="mx-px h-4 min-w-0 flex-1 appearance-none bg-[linear-gradient(transparent_7px,#f6f6f6_7px,#f6f6f6_9px,transparent_9px)] [&::-webkit-slider-thumb]:h-[13px] [&::-webkit-slider-thumb]:w-[9px] [&::-webkit-slider-thumb]:appearance-none [&::-webkit-slider-thumb]:rounded-b-[4px] [&::-webkit-slider-thumb]:border [&::-webkit-slider-thumb]:border-[#4c5a74] [&::-webkit-slider-thumb]:bg-[#d4dae6]"
        />
        <RoundButton label="Zoom in" plus />
      </div>
      <button aria-label="Record" className="ml-[7px]">
        <Svg><circle cx="8" cy="8" r="7" fill="#e8c8c8" stroke="#7c3030" /><circle cx="8" cy="8" r="5" fill="#d80c14" stroke="#8c0c10" /></Svg>
      </button>
      <button aria-label="Upload" className="ml-2 mr-[3px]">
        <Svg><path d="M8 0 L15 8 H11 V12 H5 V8 H1 Z" fill="#38b020" stroke="#1e6c12" /><rect x="2.500" y="13" width="11" height="2.500" fill="#eee" stroke="#8c5050" /></Svg>
      </button>
    </footer>
  );
}

/* ---------- physical properties window ---------- */

function Field({ id, value, className }: { id: string; value: string; className?: string }) {
  return (
    <input
      id={id}
      defaultValue={value}
      className={clsx("h-[20px] rounded-[2px] border border-[#e0e3ea] border-t-[#abadb3] bg-white px-px outline-none", className ?? "w-[111px]")}
    />
  );
}

function CenterFields({ name, x, lowLabels }: { name: string; x: string; lowLabels?: boolean }) {
  const rows = [["X", x], ["Y", "0,000000 mm"], ["Z", "0,000000 mm"]];
  return (
    <div className="flex flex-col gap-1">
      {rows.map(([axis, value]) => (
        <div key={axis} className="flex h-[20px] items-center">
          <label htmlFor={`${name}-${axis}`} className={clsx("w-[14px] text-[12px]", lowLabels ? "pt-[7px]" : "pt-[2px]")}>{axis}:</label>
          <Field id={`${name}-${axis}`} value={value} />
        </div>
      ))}
    </div>
  );
}

function PropertiesWindow() {
  const massRef = useRef<HTMLInputElement>(null);

  useEffect(() => {
    massRef.current?.focus();
    massRef.current?.select();
  }, []);

  return (
    <div
      role="dialog"
      aria-label="Physical Properties - Entire Assembly"
      className="absolute left-[330px] top-[572px] flex h-[340px] w-[586px] flex-col rounded-t-[6px] border-2 border-[#1c242e] bg-[linear-gradient(90deg,#b5cbe0,#8faac8_40%,#8ca9c7_60%,#b4c8dc_85%)] shadow-[0_0_12px_3px_rgba(0,0,0,0.55)]"
    >
      <div className="flex h-[27px] shrink-0 items-center pl-[6px]">
        <h2 className="text-[11px] text-black [text-shadow:0_0_8px_#fff,0_0_8px_#fff]">Physical Properties - Entire Assembly</h2>
        <button
          aria-label="Close"
          className="ml-auto mr-[5px] grid h-[18px] w-[47px] place-items-center self-start rounded-b-[4px] border border-t-0 border-[#501c1a] bg-[linear-gradient(#e0a598,#cc6a58_48%,#b8321c_50%,#cf5b41)] shadow-[0_0_0_1px_#ddd]"
        >
          <Svg size={12} box={12}><path d="M2 2 L10 10 M10 2 L2 10" stroke="#4b4b55" strokeWidth="4" /><path d="M2 2 L10 10 M10 2 L2 10" stroke="#fff" strokeWidth="2.500" /></Svg>
        </button>
      </div>
      <div className="mx-[5px] flex flex-1 border border-[#4c5c6e] bg-[#f0f0f0] font-['Liberation_Sans',Arial,sans-serif] text-[11px] leading-[13px] text-black">
        <div className="w-[155px] shrink-0 pl-[9px] pt-[16px]">
          <DialogCheck label="User-defined properties" />
          <label htmlFor="coords" className="mt-[11px] block">Coordinate system:</label>
          <div className="mt-[2px] grid w-[134px] items-center">
            <select id="coords" className="col-start-1 row-start-1 h-[24px] appearance-none rounded-[2px] border border-[#dadde4] border-t-[#abadb3] bg-white px-[3px]">
              <option>Model Space</option>
            </select>
            <Svg size={7} box={7} className="pointer-events-none col-start-1 row-start-1 mr-1 justify-self-end"><path d="M0 1.500 H7 L3.500 5.500 Z" fill="#000" /></Svg>
          </div>
          <div className="mt-[164px]">
            <DialogCheck label="Update on file save" />
          </div>
        </div>
        <div className="flex w-[381px] flex-col pt-[9px]">
          <div role="tablist" className="flex items-end">
            <button role="tab" aria-selected="true" className="relative z-10 -mb-px h-[21px] w-[46px] border border-b-0 border-[#84868e] bg-white pb-[2px] text-center">Global</button>
            <button role="tab" aria-selected="false" className="h-[18px] w-[49px] border border-b-0 border-l-0 border-[#84868e] bg-gradient-to-b from-[#f2f2f2] to-[#cfcfcf] pt-px">Principal</button>
          </div>
          <div className="flex-1 border border-[#84868e] bg-white pl-[8px] pt-[7px]">
            <div className="flex gap-[98px] pl-1">
              <div className="flex flex-col gap-px">
                <label htmlFor="mass">Mass:</label>
                <input
                  id="mass"
                  ref={massRef}
                  defaultValue="181,090877 kg"
                  className="h-[20px] w-[126px] rounded-[2px] border border-[#a8cbe8] border-t-[#3d7bad] bg-white px-px outline-none selection:bg-[#3399ff] selection:text-white"
                />
              </div>
              <div className="flex flex-col gap-px">
                <label htmlFor="volume">Volume:</label>
                <Field id="volume" value="23133077,842101 mm^3" className="w-[126px]" />
              </div>
            </div>
            <div className="mt-[10px] flex items-center pl-[18px]">
              <label htmlFor="user-mass" className="w-[100px] whitespace-nowrap pt-[2px]">User-quantity mass:</label>
              <Field id="user-mass" value="181,090877 kg" className="w-[126px]" />
            </div>
            <div className="mt-[7px] flex">
              <section className="w-[196px]">
                <h3 className="flex items-center gap-2 after:h-px after:flex-1 after:bg-[#a0a0a0]">Center of Mass</h3>
                <div className="flex pt-[5px]">
                  <div className="flex-1 pl-[14px]">
                    <div className="flex h-[14px] items-center pl-[14px]">
                      <DialogCheck label="Display symbol" />
                      <span className="ml-[14px] flex">
                        <span className="self-start font-['DejaVu_Sans',sans-serif] text-[10px] font-bold leading-[6px]">cm</span>
                        <Svg size={11} box={11} className="mt-1"><circle cx="5.500" cy="5.500" r="4.700" fill="#0ce00c" stroke="#063c06" /></Svg>
                      </span>
                    </div>
                    <div className="pt-[6px]"><CenterFields name="mass-center" x="1100,000000 mm" /></div>
                  </div>
                  <span className="w-px bg-[#a0a0a0]" />
                </div>
              </section>
              <section className="w-[164px] pl-[10px]">
                <h3 className="flex items-center gap-[5px] after:h-px after:flex-1 after:bg-[#a0a0a0]">Center of Volume</h3>
                <div className="flex h-[19px] items-center pl-[17px] pt-[5px]">
                  <DialogCheck label="Display symbol" />
                  <span className="ml-[10px] flex">
                    <Svg size={11} box={11} className="mt-1"><circle cx="5.500" cy="5.500" r="4.700" fill="#e00c0c" stroke="#3c0606" /></Svg>
                    <span className="self-start font-['DejaVu_Sans',sans-serif] text-[10px] font-bold leading-[6px]">cv</span>
                  </span>
                </div>
                <div className="pl-[2px] pt-[6px]"><CenterFields name="volume-center" x="1100,000000 mm" lowLabels /></div>
              </section>
            </div>
            <h3 className="mr-[12px] mt-[8px] flex items-center gap-[10px] after:h-px after:flex-1 after:bg-[#a0a0a0]">Mass Moments of Inertia</h3>
            <div className="mt-[2px] flex gap-[9px] pl-1">
              {[["Ixx", "2,698371 kg-m^2"], ["Iyy", "218,228573 kg-m^2"], ["Izz", "218,228573 kg-m^2"]].map(([axis, value]) => (
                <div key={axis} className="flex flex-col">
                  <label htmlFor={axis} className="h-[12px]">{axis}:</label>
                  <Field id={axis} value={value} />
                </div>
              ))}
            </div>
          </div>
        </div>
      </div>
    </div>
  );
}

/* ---------- taskbar ---------- */

const apps: { label: string; tone?: "open" | "active"; art: ReactNode }[] = [
  {
    label: "Explorer",
    tone: "open",
    art: (
      <>
        <path d="M3 4 H12 L14 6 H30 V28 H1 V8 Z" fill="#f5e08c" stroke="#c4a03c" />
        <path d="M4 3 H8" stroke="#3a6" strokeWidth="2" />
        <path d="M13 5 H17" stroke="#d43" strokeWidth="2" />
        <path d="M22 7 H27" stroke="#39c" strokeWidth="2" />
        <path d="M2 11 H29 V26 H2 Z" fill="#f8e89c" />
        <path d="M5 30 V19 H27 V30 H22 V23 H10 V30 Z" fill="#8fd0ee" stroke="#4f9cc8" />
      </>
    ),
  },
  {
    label: "Media Player",
    art: (
      <>
        <path d="M3 5 H24 V28 H3 Z" fill="#6aaed4" stroke="#a8d8ee" />
        <path d="M24 5 H29 V28 H24 M26.500 5 V28" fill="#3c80b0" stroke="#a8d8ee" />
        <circle cx="13" cy="17" r="8.500" fill="#f58220" stroke="#f8b070" />
        <path d="M10 12 L18 17 L10 22 Z" fill="#fff" />
      </>
    ),
  },
  {
    label: "Chrome",
    tone: "open",
    art: (
      <>
        <circle cx="16" cy="16" r="15" fill="#fcc934" />
        <path d="M16 16 L3 8.500 A15 15 0 0 0 16 31 L22 20 Z" fill="#1f9c4d" />
        <path d="M3 8.500 A15 15 0 0 1 29 8.500 H16 V16 H9 Z" fill="#e33b2e" />
        <circle cx="16" cy="16" r="7" fill="#fff" />
        <circle cx="16" cy="16" r="5.500" fill="#4285f4" />
      </>
    ),
  },
  {
    label: "Paint",
    art: (
      <>
        <path d="M2 17 C2 8 12 3 22 6 C31 9 30 22 22 26 C17 30 15 24 12 24 C8 24 9 28 5 25 C3 23 2 20 2 17 Z" fill="#cfe6f5" stroke="#7fa8c4" />
        <circle cx="7" cy="17" r="2.600" fill="#e0402c" />
        <circle cx="12" cy="11" r="2.600" fill="#3fae3c" />
        <circle cx="19" cy="9" r="2.600" fill="#f0b428" />
        <circle cx="15" cy="19" r="2.400" fill="#222" />
        <path d="M19 31 L27 6" stroke="#c77a22" strokeWidth="3" />
        <path d="M25 7 L27 0 H33 L30 7 Z" fill="#a87848" />
      </>
    ),
  },
  {
    label: "Solid Edge",
    tone: "active",
    art: (
      <>
        <path d="M5 2 L16 11 L8 14 Z" fill="#c8cdd4" />
        <path d="M1 15 L17 11 L13 31 Z" fill="#1d78e4" />
        <path d="M17 11 L14 30 L28 22 Z" fill="#b9bfc8" />
        <path d="M18 12 L31 9 L25 18 Z" fill="#2a80e0" />
      </>
    ),
  },
  {
    label: "Calculator",
    art: (
      <>
        <rect x="5" y="1" width="22" height="30" rx="2" fill="#c6def0" stroke="#6c9cc4" />
        <rect x="7" y="3" width="18" height="2" fill="#f5a030" />
        <rect x="8" y="7" width="16" height="6" fill="#e8f2fa" stroke="#5c8cb4" />
        <text x="20" y="12" fontSize="6" fontFamily="Liberation Sans" fill="#234">0</text>
        <path d="M8 17.500 H24 M8 21.500 H24 M8 25.500 H20 M8 29 H20" stroke="#6890b0" strokeWidth="2.500" strokeDasharray="3 1.500" />
        <rect x="21.500" y="24" width="3" height="5" fill="#f0942c" />
      </>
    ),
  },
  {
    label: "Kompas",
    art: (
      <>
        <circle cx="16" cy="16" r="13" fill="#8fbcec" stroke="#2b78cc" strokeWidth="3.500" />
        <path d="M6 9 H12 V23 M12 17 L21 9 H27 M15 15 L25 26" fill="none" stroke="#2b78cc" strokeWidth="3.500" />
      </>
    ),
  },
  {
    label: "Guitar Pro",
    art: (
      <>
        <path d="M3 8 C5 0 27 0 29 8 C31 14 20 30 16 32 C12 30 1 14 3 8 Z" fill="#1c1c1e" />
        <path d="M10 14 L20 5 L27 3 L25 12 L22 8 L14 14 Z" fill="#c8c8ca" />
        <text x="7" y="23" fontSize="10" fontWeight="bold" fontFamily="Liberation Sans" fill="#fff">gp<tspan fill="#e02020">6</tspan></text>
      </>
    ),
  },
  {
    label: "Arduino",
    art: (
      <>
        <circle cx="16" cy="16" r="15" fill="#00979c" />
        <circle cx="10.500" cy="16" r="4.700" fill="none" stroke="#fff" strokeWidth="2.400" />
        <circle cx="21.500" cy="16" r="4.700" fill="none" stroke="#fff" strokeWidth="2.400" />
        <path d="M9 16 H12 M20 16 H23 M21.500 14.500 V17.500" stroke="#fff" />
      </>
    ),
  },
  {
    label: "Cura",
    art: (
      <>
        <path d="M16 1 L29 8.500 V23.500 L16 31 L3 23.500 V8.500 Z" fill="#fff" stroke="#263038" strokeWidth="2" />
        <path d="M13 7 L16 5 L19 7 V17 L16 19 L13 17 Z" fill="#4cb8dc" />
        <path d="M13 7 L16 5 V19 L13 17 Z" fill="#303c44" />
        <path d="M13 17 L16 19 L8 25 L5 22 Z" fill="#98a4ac" />
        <path d="M19 17 L16 19 L24 25 L27 22 Z" fill="#303c44" />
      </>
    ),
  },
  {
    label: "3D Builder",
    art: (
      <>
        <path d="M1 1 H31 V4 H6 V18 H1 Z" fill="#f8b420" stroke="#c87c08" strokeWidth="0.700" />
        <path d="M7 9 L9 7 H18 V17 L16 19 H7 Z" fill="#22a8ec" />
        <path d="M7 9 L9 7 H18 L16 9 Z" fill="#8cdcfc" />
        <text x="18" y="16" fontSize="11" fontWeight="bold" fontFamily="Open Sans" fill="#222">3D</text>
        <circle cx="20" cy="24" r="7" fill="#dc1c1c" />
        <circle cx="18" cy="22" r="2" fill="#ff8080" />
        <path d="M9 21 L14 28 L7 27" fill="#e04428" />
      </>
    ),
  },
  {
    label: "CPU-Z",
    art: (
      <>
        <rect x="0" y="0" width="32" height="32" fill="#310d62" />
        <rect x="7" y="7" width="17" height="17" fill="none" stroke="#fff" strokeWidth="1.500" />
        <path d="M12 9 V12 M19 9 V12 M9 15 H12 M19 15 H22" stroke="#fff" />
        <rect x="12" y="12" width="7" height="7" fill="#fff" />
        <path d="M8 4.500 H24 M8 27 H18" stroke="#fff" strokeWidth="2.500" strokeDasharray="1.500 1.500" />
        <path d="M4.500 8 V24 M27 8 V16" stroke="#fff" strokeWidth="2.500" strokeDasharray="1.500 1.500" />
        <path d="M25 17 L31 19 C31 25 29 29 25 31 C21 29 19 25 19 19 Z" fill="#f8cc2c" />
        <path d="M25 17 V24 H19 C19 22 19 20 19 19 Z M25 24 H31 C30 28 28 30 25 31 Z" fill="#2c70d0" />
      </>
    ),
  },
];

function Taskbar() {
  return (
    <footer className="flex h-[40px] shrink-0 items-center border-t border-[#4c5560] bg-[linear-gradient(90deg,#0a0f18_0,#0a0f18_366px,#a9cbee_367px,#b0d0f2_450px,#94b8dc_560px,#b4d4f6_640px,#98bce0_740px,#b4d4f6_830px,#a8c8e8_915px,#05090f_932px)]">
      <button aria-label="Start" className="ml-[8px] mr-[14px]">
        <Svg size={38} box={38}>
          <defs>
            <radialGradient id="start" cx="0.500" cy="0.900" r="0.900">
              <stop offset="0" stopColor="#3fd0f8" />
              <stop offset="0.500" stopColor="#0c5c98" />
              <stop offset="1" stopColor="#8ca8bc" />
            </radialGradient>
          </defs>
          <circle cx="19" cy="19" r="17.500" fill="url(#start)" stroke="#5c7c94" />
          <path d="M11 10 Q15 8 18 11 L16 18 Q13 15 9 17 Z" fill="#f05a28" />
          <path d="M20 11 Q24 14 29 11 L27 18 Q22 20 18 18 Z" fill="#8cc63e" />
          <path d="M9 19 Q13 17 16 20 L14 27 Q11 24 7 26 Z" fill="#3ca4e4" />
          <path d="M18 20 Q22 23 26 20 L24 28 Q20 30 16 27 Z" fill="#fcc828" />
        </Svg>
      </button>
      <div className="flex gap-[4px]">
        {apps.map((app) => (
          <button
            key={app.label}
            aria-label={app.label}
            className={clsx(
              "grid h-[38px] w-[58px] place-items-center rounded-[2px] border",
              !app.tone && "border-transparent",
              app.tone === "open" && "border-[#84888c] bg-gradient-to-br from-[#8c9092] via-[#3c4246] to-[#2c3034]",
              app.tone === "active" && "border-[#e8eef4] bg-gradient-to-r from-[#8c9298] via-[#c4d0dc] to-[#e0ecf8]"
            )}
          >
            <Svg size={32} box={32}>{app.art}</Svg>
          </button>
        ))}
      </div>
      <div className="ml-auto flex h-full items-center text-[11px] text-white">
        <span className="mb-1 w-[33px]">RU</span>
        <button aria-label="Show hidden icons" className="w-[18px]">
          <Svg size={8} box={8}><path d="M0 6 L4 2 L8 6 Z" fill="#fff" /></Svg>
        </button>
        <Svg className="mr-[8px]"><path d="M2 14 V12 M5 14 V10.500 M8 14 V8.500 M11 14 V6" stroke="#fff" strokeWidth="2" /><path d="M14 14 V4" stroke="#777" strokeWidth="2" /></Svg>
        <Svg className="mr-[8px]">
          <path d="M2 3 H7 M2 3 V13 M9 0 V4 M13 0 V4 M7 5 H15 V8 L12 11 V15" fill="none" stroke="#fff" strokeWidth="1.800" />
          <path d="M8 5 H14 V8 H8 Z" fill="#fff" />
          <path d="M1 8 L8 15 M8 8 L1 15" stroke="#e81414" strokeWidth="2.600" />
        </Svg>
        <Svg className="mr-[18px]"><path d="M2 5.500 H5 L9 2 V14 L5 10.500 H2 Z" fill="#fff" /><path d="M12 5 Q14 8 12 11" fill="none" stroke="#aaa" strokeWidth="1.500" /></Svg>
        <time className="w-[56px] text-center leading-[17px]">22:46<br />23.07.2018</time>
        <button aria-label="Show desktop" className="ml-[10px] h-full w-[15px] border border-[#5c6064] bg-gradient-to-b from-[#64686c] to-[#0c0f12]" />
      </div>
    </footer>
  );
}

export default function App() {
  return (
    <div className="flex min-h-screen flex-col bg-[#cfd3dd] font-['Open_Sans','Noto_Sans',sans-serif]">
      <div className="relative flex flex-1 flex-col overflow-hidden">
        <TitleBar />
        <TabRow />
        <Ribbon />
        <div className="mt-[2px] flex flex-1">
          <LeftRail />
          <div className="flex min-w-0 flex-1 flex-col">
            <Viewport />
            <PromptBar />
          </div>
          <RightRail />
        </div>
        <StatusBar />
        <PropertiesWindow />
      </div>
      <Taskbar />
    </div>
  );
}
